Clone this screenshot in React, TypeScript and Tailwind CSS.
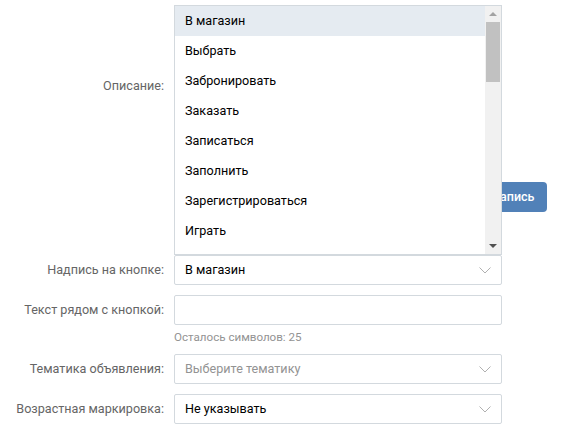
const options = [
  "В магазин",
  "Выбрать",
  "Забронировать",
  "Заказать",
  "Записаться",
  "Заполнить",
  "Зарегистрироваться",
  "Играть",
  "Купить",
];

function Label({ children }: { children: string }) {
  return (
    <div className="w-[174px] shrink-0 pr-[10px] text-right text-[12.6px] text-[#656565]">
      {children}
    </div>
  );
}

function Chevron() {
  return (
    <svg width="12" height="7" viewBox="0 0 12 7" className="mr-[2px]">
      <polyline points="0.5,0.5 6,6 11.5,0.5" fill="none" stroke="#b0b0b0" strokeWidth="1" />
    </svg>
  );
}

function Select({ value, placeholder }: { value?: string; placeholder?: string }) {
  return (
    <div className="flex h-[30px] w-[328px] items-center justify-between rounded-[2px] border border-[#d3d9de] bg-white pl-[10px] pr-[8px] text-[12.6px]">
      <span className={value ? "text-[#000]" : "text-[#939393]"}>{value ?? placeholder}</span>
      <Chevron />
    </div>
  );
}

function Listbox() {
  return (
    <div className="absolute left-0 top-[-250px] z-10 flex h-[250px] w-[328px] border border-[#d3d9de] bg-white">
      <div className="flex-1 overflow-hidden">
        {options.map((o, i) => (
          <div
            key={o}
            className={`flex h-[30px] items-center pl-[10px] text-[12.6px] text-[#000] ${i === 0 ? "bg-[#e5ebf1]" : ""}`}
          >
            {o}
          </div>
        ))}
      </div>
      <div className="flex w-[16px] flex-col bg-[#f1f1f1]">
        <div className="flex h-[16px] items-center justify-center">
          <div className="h-0 w-0 border-x-[4px] border-b-[4px] border-x-transparent border-b-[#a3a3a3]" />
        </div>
        <div className="mx-[1px] h-[60px] bg-[#c1c1c1]" />
        <div className="flex-1" />
        <div className="flex h-[16px] items-center justify-center">
          <div className="h-0 w-0 border-x-[4px] border-t-[4px] border-x-transparent border-t-[#505050]" />
        </div>
      </div>
    </div>
  );
}

export default function App() {
  return (
    <div
      className="h-[439px] w-[586px] bg-white pt-[6px]"
      style={{ fontFamily: "Roboto, 'Open Sans', sans-serif" }}
    >
      <div className="flex items-center">
        <Label>Описание:</Label>
        <div className="h-[160px] w-[328px] rounded-[2px] border border-[#d3d9de]" />
      </div>

      <div className="mt-[16px] flex">
        <div className="w-[174px] shrink-0" />
        <button className="ml-[306px] flex h-[30px] w-[67px] items-center justify-center rounded-[4px] bg-[#5181b8] text-[12.5px] font-medium text-white">
          Запись
        </button>
      </div>

      <div className="mt-[43px] flex items-center">
        <Label>Надпись на кнопке:</Label>
        <div className="relative">
          <Listbox />
          <Select value="В магазин" />
        </div>
      </div>

      <div className="mt-[10px] flex items-center">
        <Label>Текст рядом с кнопкой:</Label>
        <div className="h-[30px] w-[328px] rounded-[2px] border border-[#d3d9de] bg-white" />
      </div>

      <div className="mt-[4px] flex">
        <div className="w-[174px] shrink-0" />
        <div className="text-[11.6px] leading-[16px] text-[#939393]">Осталось символов: 25</div>
      </div>

      <div className="mt-[9px] flex items-center">
        <Label>Тематика объявления:</Label>
        <Select placeholder="Выберите тематику" />
      </div>

      <div className="mt-[10px] flex items-center">
        <Label>Возрастная маркировка:</Label>
        <Select value="Не указывать" />
      </div>
    </div>
  );
}
